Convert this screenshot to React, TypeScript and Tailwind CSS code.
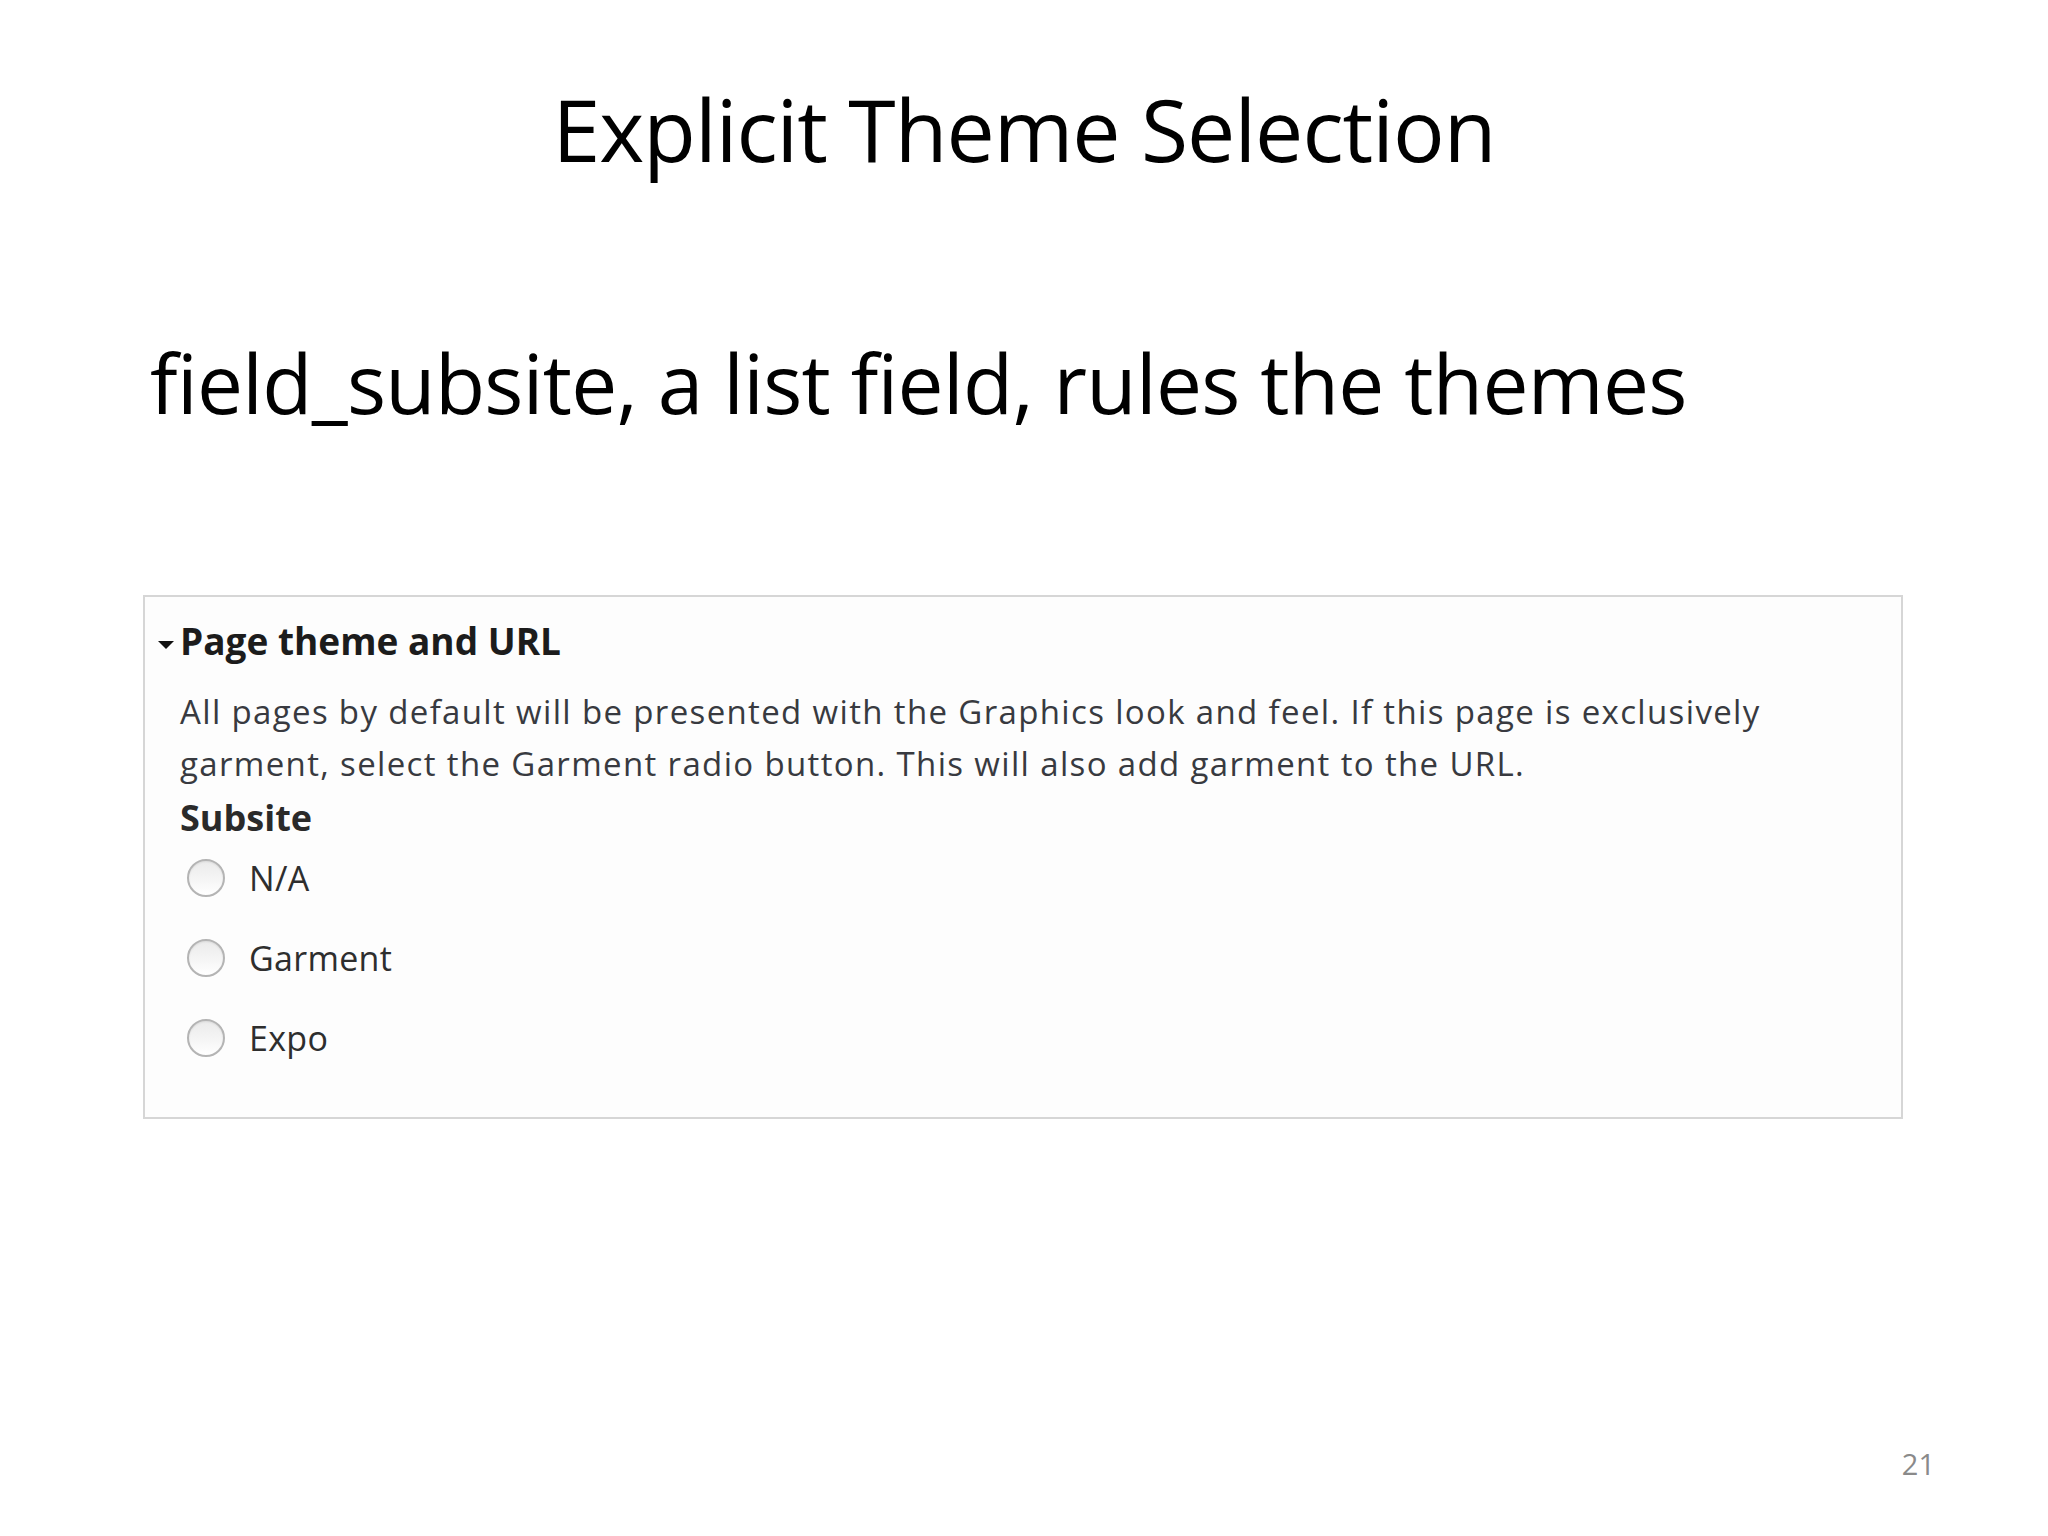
import React from "react";

function Radio({ label }: { label: string }) {
  return (
    <div className="flex h-[80px] items-center">
      <span className="ml-[42px] block h-[38px] w-[38px] shrink-0 rounded-full border-[2px] border-[#b4b4b4] bg-gradient-to-b from-[#ebebeb] via-[#f4f4f4] to-white shadow-[inset_0_1px_2px_rgba(0,0,0,0.08)]" />
      <span className="ml-[24px] text-[34px] leading-none tracking-[0.3px] text-[#2e2e2e]">{label}</span>
    </div>
  );
}

export default function App() {
  return (
    <div className="flex h-[1536px] w-[2048px] flex-col bg-white font-['Open_Sans',sans-serif] text-black">
      <h1 className="mt-[86px] text-center text-[86px] font-normal leading-none tracking-[-1px]">
        Explicit Theme Selection
      </h1>

      <p className="mt-[169px] pl-[150px] text-[82px] leading-none tracking-[-0.7px]">
        field_subsite, a list field, rules the themes
      </p>

      <div className="ml-[143px] mt-[172px] h-[524px] w-[1760px] border-2 border-[#d6d6d6] bg-[#fdfdfd]">
        <div className="mt-[25px] flex items-start">
          <svg
            className="ml-[13px] mt-[19px] shrink-0"
            width="16"
            height="8"
            viewBox="0 0 16 8"
          >
            <polygon points="0,0 16,0 8,8" fill="#111" />
          </svg>
          <span className="ml-[6px] text-[37px] font-bold leading-none text-[#1c1c1c]">
            Page theme and URL
          </span>
        </div>

        <div className="mt-[27px] pl-[35px] text-[33px] leading-[52px] tracking-[1.35px] text-[#383a40]">
          All pages by default will be presented with the Graphics look and feel. If this page is exclusively
          <br />
          garment, select the Garment radio button. This will also add garment to the URL.
        </div>
        <div className="mt-[4px] pl-[35px] text-[36px] font-bold leading-[48px] text-[#2a2a2a]">Subsite</div>

        <div className="-mt-[4px] flex flex-col">
          <Radio label="N/A" />
          <Radio label="Garment" />
          <Radio label="Expo" />
        </div>
      </div>

      <div className="mb-[58px] mt-auto pr-[113px] text-right text-[29px] leading-none text-[#8a8a8a]">
        21
      </div>
    </div>
  );
}
